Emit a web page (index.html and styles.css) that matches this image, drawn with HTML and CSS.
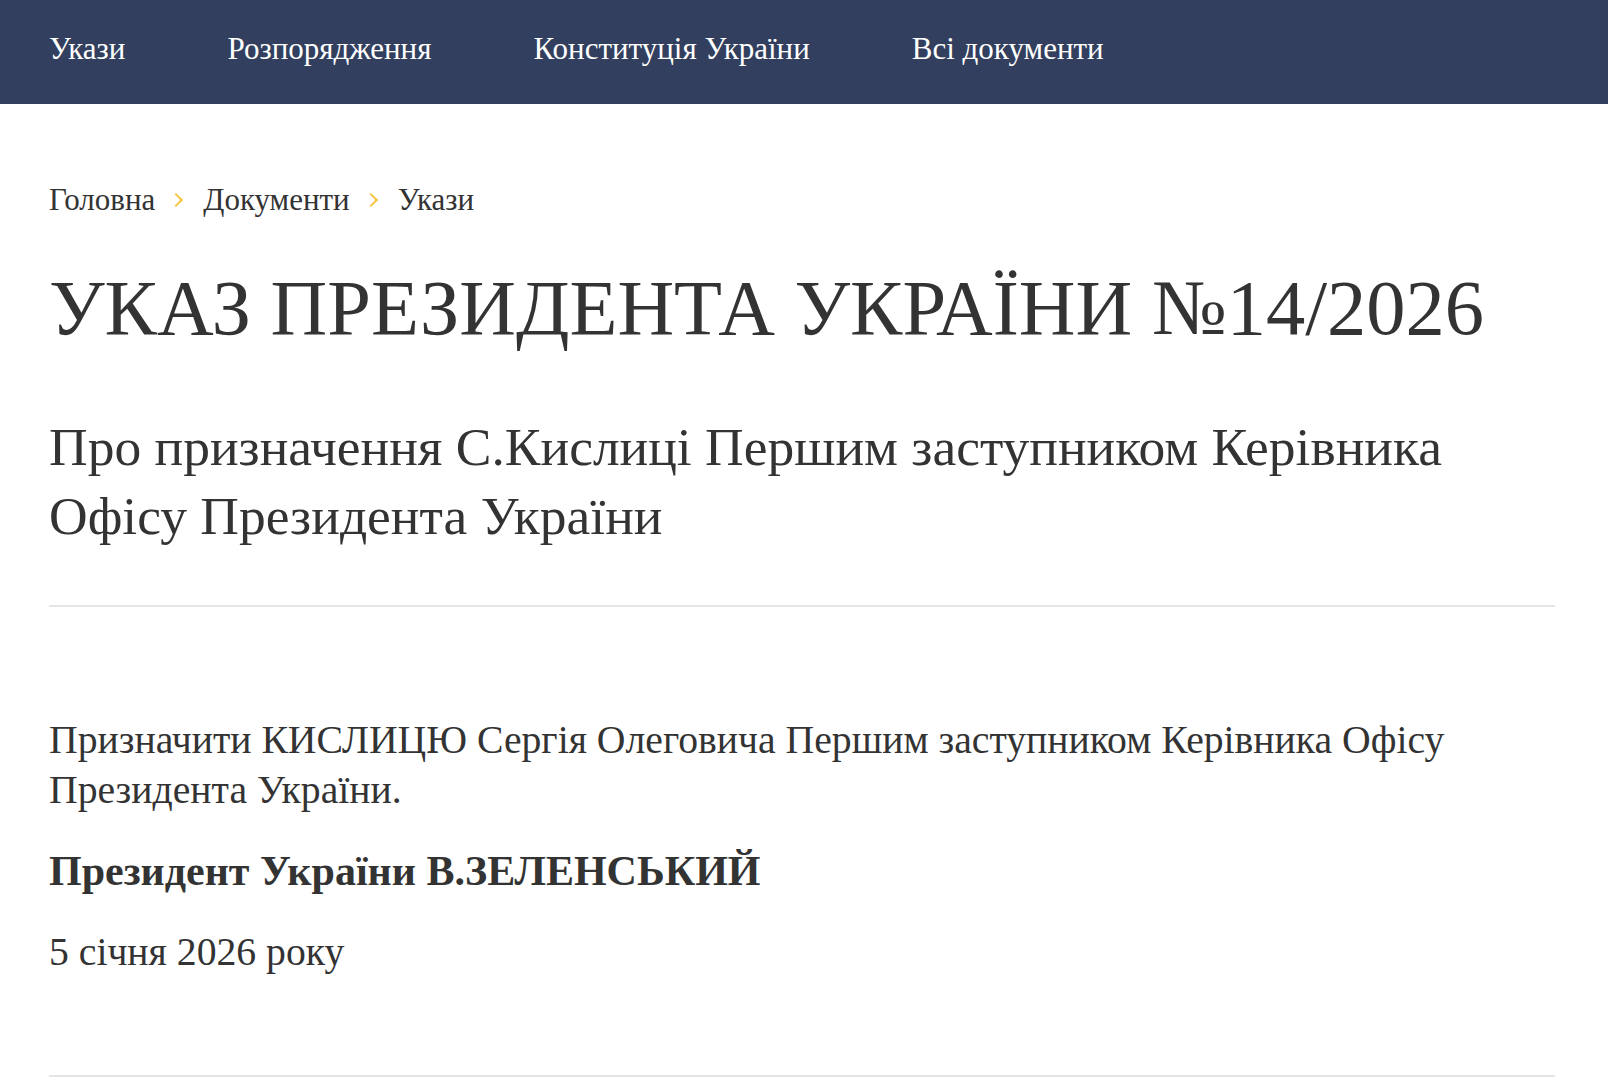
FILE: index.html
```html
<!DOCTYPE html>
<html lang="uk">
<head>
    <meta charset="UTF-8">
    <meta name="viewport" content="width=device-width, initial-scale=1.0">
    <title>Указ Президента України №14/2026</title>
    <link rel="stylesheet" href="styles.css">
</head>
<body>

    <header class="topbar">
        <nav class="menu">
            <a href="#" class="menu-link">Укази</a>
            <a href="#" class="menu-link">Розпорядження</a>
            <a href="#" class="menu-link">Конституція України</a>
            <a href="#" class="menu-link">Всі документи</a>
        </nav>
    </header>

    <main class="page">
        <div class="breadcrumbs">
            <a href="#" class="crumb">Головна</a>
            <span class="crumb-sep"></span>
            <a href="#" class="crumb">Документи</a>
            <span class="crumb-sep"></span>
            <span class="crumb">Укази</span>
        </div>

        <h1 class="doc-title">УКАЗ ПРЕЗИДЕНТА УКРАЇНИ №14/2026</h1>
        <h2 class="doc-subtitle">Про призначення С.Кислиці Першим заступником Керівника Офісу Президента України</h2>

        <div class="doc-text">
            <p>Призначити КИСЛИЦЮ Сергія Олеговича Першим заступником Керівника Офісу Президента України.</p>
            <p class="signature">Президент України В.ЗЕЛЕНСЬКИЙ</p>
            <p>5 січня 2026 року</p>
        </div>
    </main>

</body>
</html>
```

FILE: styles.css
```css
/* Базові стилі */
* {
    margin: 0;
    padding: 0;
    box-sizing: border-box;
}

body {
    font-family: "Liberation Serif", Georgia, serif;
    color: #333;
    background: #fff;
}

a {
    color: inherit;
    text-decoration: none;
}

/* Верхнє меню */
.topbar {
    background-color: #323f5e;
    height: 104px;
    display: flex;
    align-items: center;
    padding: 0 49px 6px;
}

.menu {
    display: flex;
    gap: 102px;
}

.menu-link {
    color: #fff;
    font-size: 31px;
    line-height: 36px;
}

/* Контент */
.page {
    padding: 0 53px 0 49px;
}

.breadcrumbs {
    display: flex;
    align-items: center;
    gap: 16px;
    font-size: 31px;
    line-height: 36px;
    padding-top: 78px;
}

.crumb-sep {
    width: 10px;
    height: 10px;
    border-top: 2px solid #f5c542;
    border-right: 2px solid #f5c542;
    transform: rotate(45deg);
    margin-right: 6px;
}

.doc-title {
    font-size: 78.5px;
    font-weight: normal;
    line-height: 1.2;
    margin-top: 43px;
}

.doc-subtitle {
    font-size: 53.5px;
    font-weight: normal;
    line-height: 69px;
    margin-top: 58px;
    padding-bottom: 54px;
    border-bottom: 2px solid #e5e5e5;
}

.doc-text {
    font-size: 39.7px;
    line-height: 50px;
    padding-top: 108px;
    padding-bottom: 67px;
    border-bottom: 2px solid #e5e5e5;
}

.doc-text p {
    margin-bottom: 31px;
}

.doc-text .signature {
    font-size: 42px;
    font-weight: bold;
}
```
